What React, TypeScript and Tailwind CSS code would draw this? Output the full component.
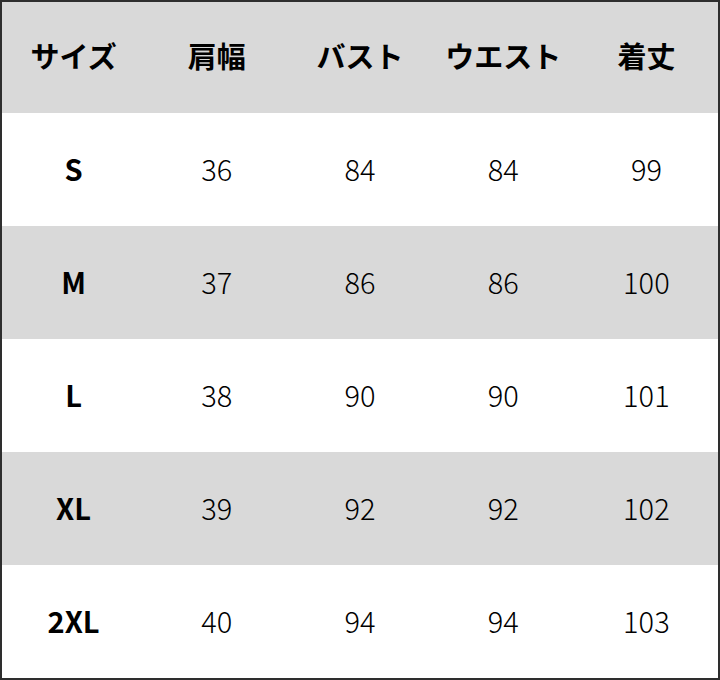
const header = ["サイズ", "肩幅", "バスト", "ウエスト", "着丈"];

const rows = [
  ["S", "36", "84", "84", "99"],
  ["M", "37", "86", "86", "100"],
  ["L", "38", "90", "90", "101"],
  ["XL", "39", "92", "92", "102"],
  ["2XL", "40", "94", "94", "103"],
];

export default function App() {
  return (
    <div
      className="w-[720px] h-[680px] bg-white border-2 border-[#2e2e2e] flex flex-col text-black"
      style={{ fontFamily: '"Noto Sans CJK JP", "Noto Sans", sans-serif' }}
    >
      <div className="h-[111px] grid grid-cols-5 items-center bg-[#d9d9d9] pb-1">
        {header.map((h) => (
          <div key={h} className="text-center text-[29px] font-bold">
            {h}
          </div>
        ))}
      </div>
      {rows.map((r, i) => (
        <div
          key={r[0]}
          className={`flex-1 grid grid-cols-5 items-center pb-0.5 ${i % 2 === 1 ? "bg-[#d9d9d9]" : "bg-white"}`}
        >
          {r.map((c, j) => (
            <div
              key={j}
              className={`text-center text-[29px] ${j === 0 ? "font-bold" : "font-light"}`}
            >
              {c}
            </div>
          ))}
        </div>
      ))}
    </div>
  );
}
